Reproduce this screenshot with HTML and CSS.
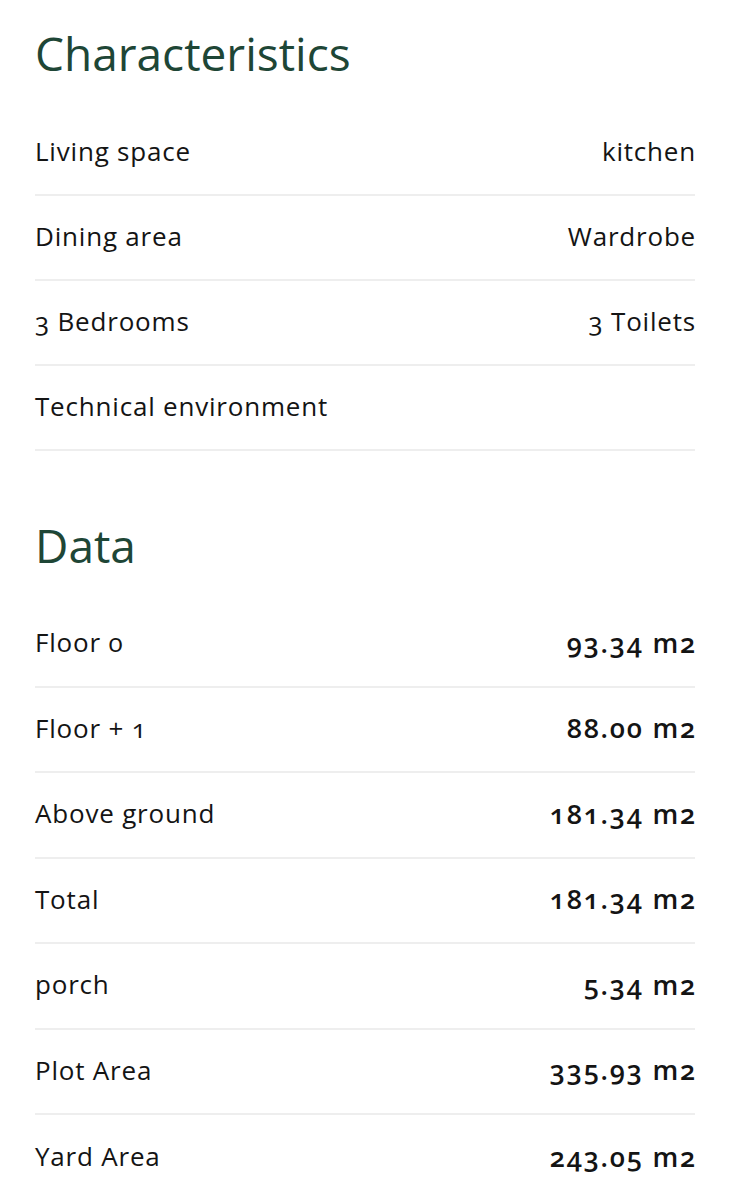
FILE: index.html
```html
<!DOCTYPE html>
<html lang="en">
<head>
<meta charset="utf-8">
<title>Characteristics</title>
<link rel="stylesheet" href="styles.css">
</head>
<body>
<main class="page">
  <section class="block block-first">
    <h2 class="block-title">Characteristics</h2>
    <ul class="rows">
      <li class="row"><span class="label">Living space</span><span class="text-value">kitchen</span></li>
      <li class="row"><span class="label">Dining area</span><span class="text-value">Wardrobe</span></li>
      <li class="row"><span class="label">3 Bedrooms</span><span class="text-value">3 Toilets</span></li>
      <li class="row"><span class="label">Technical environment</span></li>
    </ul>
  </section>
  <section class="block block-data">
    <h2 class="block-title">Data</h2>
    <ul class="rows rows-data">
      <li class="row"><span class="label">Floor 0</span><span class="num-value">93.34 m2</span></li>
      <li class="row"><span class="label">Floor + 1</span><span class="num-value">88.00 m2</span></li>
      <li class="row"><span class="label">Above ground</span><span class="num-value">181.34 m2</span></li>
      <li class="row"><span class="label">Total</span><span class="num-value">181.34 m2</span></li>
      <li class="row"><span class="label">porch</span><span class="num-value">5.34 m2</span></li>
      <li class="row"><span class="label">Plot Area</span><span class="num-value">335.93 m2</span></li>
      <li class="row"><span class="label">Yard Area</span><span class="num-value">243.05 m2</span></li>
    </ul>
  </section>
</main>
</body>
</html>
```
FILE: styles.css
```css
* { box-sizing: border-box; }
html, body { margin: 0; padding: 0; background: #fff; }
body {
  font-family: "Open Sans", "Liberation Sans", sans-serif;
  color: #141414;
  font-variant-numeric: oldstyle-nums;
}
.page { padding: 0 35px; }
.block-title {
  margin: 0;
  font-family: "Open Sans", "Liberation Sans", sans-serif;
  font-weight: 400;
  font-size: 46px;
  line-height: 52px;
  color: #1e4636;
}
.block-first .block-title { margin-top: 27px; margin-bottom: 32px; }
.block-data .block-title { margin-top: 68px; margin-bottom: 31px; }
.rows { list-style: none; margin: 0; padding: 0; }
.row {
  display: flex;
  justify-content: space-between;
  align-items: center;
  height: 85px;
  padding-bottom: 3px;
  border-bottom: 2px solid #eeeeee;
}
.rows-data .row { height: 85.5px; }
.rows-data .row:last-child { border-bottom: none; }
.label, .text-value {
  font-size: 26px;
  font-weight: 400;
  letter-spacing: 0.8px;
  font-variant-numeric: oldstyle-nums;
}
.text-value { margin-right: -1px; }
.num-value {
  font-family: "Open Sans", "Liberation Sans", sans-serif;
  font-size: 27px;
  font-weight: 600;
  font-variant-numeric: oldstyle-nums;
  letter-spacing: 1.8px;
  margin-right: -2px;
}
```
